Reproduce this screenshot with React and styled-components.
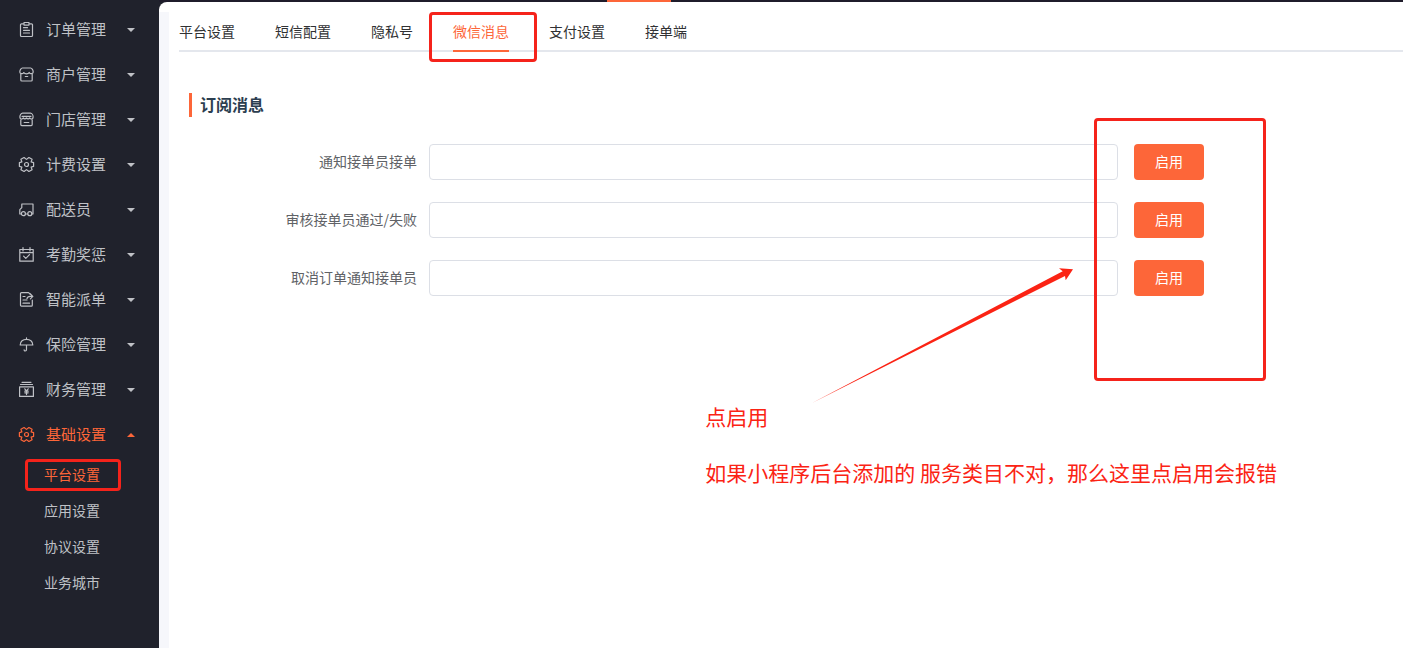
import React, { useState } from 'react';
import styled, { createGlobalStyle, css } from 'styled-components';

const GlobalStyle = createGlobalStyle`
  * {
    box-sizing: border-box;
  }
  body {
    margin: 0;
    background: #20222c;
    color: #303133;
    font-family: 'Noto Sans CJK SC', sans-serif;
    font-size: 14px;
  }
  button, input {
    font-family: inherit;
  }
`;

const Page = styled.div`
  display: flex;
  min-height: 100vh;
`;

const Sidebar = styled.nav`
  flex: 0 0 159px;
  padding-top: 7px;
  background: #20222c;
`;

const MenuButton = styled.button`
  display: flex;
  align-items: center;
  width: 100%;
  height: 45px;
  padding: 0 24px 0 19px;
  border: 0;
  background: none;
  color: ${(p) => (p.$active ? '#fd6639' : '#bfc1c6')};
  font-size: 15px;
  line-height: 20px;
  cursor: pointer;
`;

const MenuLabel = styled.span`
  flex: 1;
  margin-left: 12px;
  padding-bottom: 2px;
  text-align: left;
`;

const MenuIcon = styled.svg`
  width: 15px;
  height: 15px;
  overflow: visible;
  fill: none;
  stroke: currentColor;
  stroke-width: 1.2;
  stroke-linejoin: round;
  stroke-linecap: round;
`;

const Caret = styled.span`
  border: 4px solid transparent;
  ${(p) =>
    p.$open
      ? css`
          border-top: 0;
          border-bottom-color: currentColor;
        `
      : css`
          border-bottom: 0;
          border-top-color: currentColor;
        `}
`;

const SubMenu = styled.div`
  display: flex;
  flex-direction: column;
`;

const SubLink = styled.a`
  position: relative;
  padding: 0 0 2px 44px;
  color: ${(p) => (p.$active ? '#fd6639' : '#bfc1c6')};
  font-size: 14px;
  line-height: 34px;
  text-decoration: none;
`;

const Main = styled.main`
  flex: 1;
  min-width: 0;
  display: flex;
  flex-direction: column;
`;

const TopBar = styled.div`
  height: 2px;
  padding-left: 448px;
  background: #1f1c2b;
`;

const TopIndicator = styled.div`
  width: 64px;
  height: 2px;
  background: #fd6639;
`;

const Panel = styled.div`
  flex: 1;
  display: flex;
  padding-left: 10px;
  border-top: 10px solid #fff;
  border-radius: 8px 0 0 0;
  background: #f6f7fb;
`;

const Content = styled.div`
  position: relative;
  flex: 1;
  padding-left: 10px;
  background: #fff;
`;

const Tabs = styled.div`
  display: flex;
  gap: 40px;
  height: 40px;
  box-shadow: inset 0 -2px #e4e7ed;
`;

const Tab = styled.button`
  position: relative;
  padding: 0 0 2px;
  border: 0;
  background: none;
  color: ${(p) => (p.$active ? '#fd6639' : '#303133')};
  box-shadow: ${(p) => (p.$active ? 'inset 0 -2px #fd6639' : 'none')};
  font-size: 14px;
  line-height: 38px;
  white-space: nowrap;
  cursor: pointer;
`;

const Section = styled.section`
  padding: 41px 199px 0 10px;
`;

const SectionTitle = styled.h2`
  margin: 0 0 27px;
  padding: 0 0 2px 8px;
  border-left: 3px solid #fd6639;
  color: #2c3e50;
  font-size: 16px;
  font-weight: 700;
  line-height: 22px;
`;

const Form = styled.form`
  display: flex;
  flex-direction: column;
  gap: 22px;
`;

const Row = styled.div`
  display: flex;
  align-items: center;
`;

const Label = styled.label`
  flex: 0 0 240px;
  padding: 0 12px 2px 0;
  color: #606266;
  line-height: 34px;
  text-align: right;
`;

const TextInput = styled.input`
  flex: 1;
  min-width: 0;
  height: 36px;
  margin-right: 16px;
  padding: 0 15px;
  border: 1px solid #dcdfe6;
  border-radius: 4px;
  background: #fff;
  color: #606266;
  font-size: 14px;
`;

const EnableButton = styled.button`
  width: 70px;
  height: 36px;
  padding: 0 0 2px;
  border: 0;
  border-radius: 4px;
  background: #fd6639;
  color: #fff;
  font-size: 14px;
  cursor: pointer;
`;

// Red markers that lie over the page
const Marker = styled.span`
  position: absolute;
  border: 3px solid #f5231b;
  border-radius: 4px;
  pointer-events: none;
`;

const TabMarker = styled(Marker)`
  inset: 0 -28px -10px -24px;
`;

const SubMarker = styled(Marker)`
  top: 2px;
  bottom: 2px;
  left: 25px;
  width: 96px;
`;

const ButtonsMarker = styled(Marker)`
  top: 106px;
  right: 137px;
  width: 172px;
  height: 263px;
`;

const Arrow = styled.svg`
  position: absolute;
  top: 256px;
  right: 330px;
  width: 262px;
  height: 136px;
  fill: #fb2314;
  pointer-events: none;
`;

const Note = styled.div`
  position: absolute;
  top: 390px;
  right: 126px;
  color: #fb2314;
  font-size: 21px;
  line-height: 28px;
  white-space: nowrap;

  p {
    margin: 0 0 28px;
  }
`;

const gear = (
  <>
    <path d="M14.6 5.600v3.800l-2.500.700 1 2.600-3.200 1.800-2.400-1.900-2.400 1.900-3.200-1.800 1-2.600L.4 9.400V5.600l2.500-.700-1-2.600L5.100.500l2.400 1.900L9.900.500l3.200 1.800-1 2.600z" />
    <circle cx="7.500" cy="7.500" r="2" />
  </>
);

const icons = {
  order: (
    <>
      <path d="M4.500 1.800H2.500a1 1 0 0 0-1 1v10.700a1 1 0 0 0 1 1h10a1 1 0 0 0 1-1V2.800a1 1 0 0 0-1-1h-2" />
      <path d="M5 .5h5v2.600H5zM4.500 5.700h4M4.500 8.300h6M4.500 11h6" />
    </>
  ),
  merchant: (
    <>
      <path d="M3.400 1h8.200c1.400 0 2.600 2.500 2.600 3.900 0 2-3 2.500-4 .6-.9 1.900-4.500 1.900-5.400 0-1 1.900-4 1.400-4-.6C.8 3.500 2 1 3.400 1z" />
      <path d="M1.800 7.200V13a1 1 0 0 0 1 1h9.400a1 1 0 0 0 1-1V7.200M6.300 9.500h2.400" />
    </>
  ),
  store: (
    <>
      <path d="M3.600 1.200h7.800c1.700 0 2.700 2.200 2.700 3.600s-.5 2.300-1.600 2.300-1.400-.6-1.800-1.200c-.7 1.300-2.400 1.300-3.200 0-.8 1.300-2.500 1.300-3.200 0C3.900 6.500 3.600 7.100 2.500 7.100S.9 6.200.9 4.800s1-3.600 2.700-3.600z" />
      <path d="M3 4.300h9M1.800 8v4.600a1 1 0 0 0 1 1h9.400a1 1 0 0 0 1-1V8M5.200 10.500h4.600" />
    </>
  ),
  gear,
  courier: (
    <>
      <path d="M2.200 12H.8V7.700l2-2.100V2H14v10h-1.100M6.700 12h2" />
      <circle cx="4.400" cy="11.700" r="2" />
      <circle cx="10.800" cy="11.700" r="2" />
    </>
  ),
  calendar: <path d="M.8 2.500h13.400v11.700H.8zM.8 5.600h13.400M4 .5v3.400M11 .5v3.400M4.600 9.200l2.200 2.200 3.700-3.700" />,
  dispatch: (
    <>
      <path d="M13.300 8v5.200a1 1 0 0 1-1 1H2.500a1 1 0 0 1-1-1V1.600a1 1 0 0 1 1-1h7l1.800 1.600" />
      <path d="M8 6.600c.3-1.500 1.500-2.200 3.200-2.200h2.600M11.400 2l2.400 2.400-2.400 2.400M4 4.500h2M4 8h4M4 11.200h6.500" />
    </>
  ),
  umbrella: <path d="M1.200 8c0-3.600 2.800-5.700 6.300-5.700S13.800 4.400 13.800 8zM7.500.9v1.400M7.500 8v4.600c0 1.800-2.400 1.800-2.400.2" />,
  finance: (
    <>
      <path d="M3 .3h9M1.500 2.500h12M.6 4.900h13.800v9.500H.6z" />
      <path d="M5.800 6.800l1.700 2 1.700-2M7.500 8.800v3.800M5.800 9.200h3.400M5.800 10.800h3.400" />
    </>
  ),
};

const menu = [
  { label: '订单管理', icon: 'order' },
  { label: '商户管理', icon: 'merchant' },
  { label: '门店管理', icon: 'store' },
  { label: '计费设置', icon: 'gear' },
  { label: '配送员', icon: 'courier' },
  { label: '考勤奖惩', icon: 'calendar' },
  { label: '智能派单', icon: 'dispatch' },
  { label: '保险管理', icon: 'umbrella' },
  { label: '财务管理', icon: 'finance' },
  { label: '基础设置', icon: 'gear', active: true },
];

const subMenu = ['平台设置', '应用设置', '协议设置', '业务城市'];
const tabs = ['平台设置', '短信配置', '隐私号', '微信消息', '支付设置', '接单端'];
const messages = ['通知接单员接单', '审核接单员通过/失败', '取消订单通知接单员'];

const App = () => {
  const [tab, setTab] = useState('微信消息');

  return (
    <>
      <GlobalStyle />
      <Page>
        <Sidebar>
          {menu.map((item) => (
            <MenuButton key={item.label} type="button" $active={item.active} aria-expanded={!!item.active}>
              <MenuIcon viewBox="0 0 15 15" aria-hidden="true">{icons[item.icon]}</MenuIcon>
              <MenuLabel>{item.label}</MenuLabel>
              <Caret $open={item.active} />
            </MenuButton>
          ))}
          <SubMenu>
            {subMenu.map((name, i) => (
              <SubLink key={name} href="#" $active={i === 0}>
                {name}
                {i === 0 && <SubMarker />}
              </SubLink>
            ))}
          </SubMenu>
        </Sidebar>

        <Main>
          <TopBar>
            <TopIndicator />
          </TopBar>
          <Panel>
            <Content>
              <Tabs role="tablist">
                {tabs.map((name) => (
                  <Tab
                    key={name}
                    type="button"
                    role="tab"
                    aria-selected={tab === name}
                    $active={tab === name}
                    onClick={() => setTab(name)}
                  >
                    {name}
                    {name === '微信消息' && <TabMarker />}
                  </Tab>
                ))}
              </Tabs>

              <Section>
                <SectionTitle>订阅消息</SectionTitle>
                <Form onSubmit={(e) => e.preventDefault()}>
                  {messages.map((name, i) => (
                    <Row key={name}>
                      <Label htmlFor={`message-${i}`}>{name}</Label>
                      <TextInput id={`message-${i}`} type="text" />
                      <EnableButton type="submit">启用</EnableButton>
                    </Row>
                  ))}
                </Form>
              </Section>

              <ButtonsMarker />
              <Arrow viewBox="0 0 262 136" aria-hidden="true">
                <path d="M1 135 251.700 3.300 248 .3 262 1.300 254.700 12.300 254 8z" />
              </Arrow>
              <Note>
                <p>点启用</p>
                <p>如果小程序后台添加的 服务类目不对，那么这里点启用会报错</p>
              </Note>
            </Content>
          </Panel>
        </Main>
      </Page>
    </>
  );
};

export default App;
